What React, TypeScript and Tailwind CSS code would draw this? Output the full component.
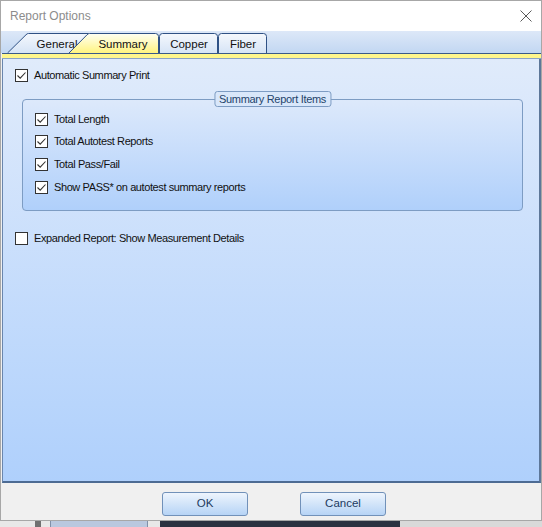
import type { ReactNode } from 'react';

function CheckBox({ checked }: { checked: boolean }) {
  return (
    <span className="flex h-[13px] w-[13px] shrink-0 items-center justify-center border border-[#333333] bg-white">
      {checked && (
        <svg width="11" height="11" viewBox="0 0 11 11" fill="none" aria-hidden="true">
          <path d="M1.5 5.5 L4.2 8.2 L9.5 2.5" stroke="#333333" strokeWidth="1.1" />
        </svg>
      )}
    </span>
  );
}

function Option({ checked, children }: { checked: boolean; children: ReactNode }) {
  return (
    <label className="flex h-[16px] items-center gap-[6px] text-[11px] tracking-[-0.4px] text-[#111]">
      <CheckBox checked={checked} />
      <span>{children}</span>
    </label>
  );
}

interface TabProps {
  label: string;
  width: number;
  path: string;
  fill: string;
  textX: number;
  className?: string;
}

function Tab({ label, width, path, fill, textX, className = '' }: TabProps) {
  return (
    <div className={`relative h-[20px] shrink-0 ${className}`} style={{ width }}>
      <svg className="absolute inset-0" width={width} height="20" viewBox={`0 0 ${width} 20`} aria-hidden="true">
        <path d={path} fill={`url(#${fill})`} stroke="#2f5185" strokeWidth="1" />
      </svg>
      <span
        className="absolute top-[4px] -translate-x-1/2 whitespace-nowrap text-[11.5px] leading-[14px] text-[#111]"
        style={{ left: textX }}
      >
        {label}
      </span>
    </div>
  );
}

function DialogButton({ children }: { children: ReactNode }) {
  return (
    <button
      type="button"
      className="relative h-[24px] w-[86px] overflow-hidden rounded-[3px] border border-[#7191b9] bg-gradient-to-b from-[#eef5fd] via-[#d2e4f9] to-[#b6d4f6] text-[11.5px] text-[#1d3a5f]"
    >
      {children}
    </button>
  );
}

export default function App() {
  return (
    <div className="relative h-[527px] w-[542px] overflow-hidden bg-[#f0f0f0] font-['Liberation_Sans',Arial,sans-serif]">
      <svg width="0" height="0" className="absolute">
        <defs>
          <linearGradient id="tabIdle" x1="0" y1="0" x2="0" y2="1">
            <stop offset="0" stopColor="#f5f8fd" />
            <stop offset="1" stopColor="#d6e4f6" />
          </linearGradient>
          <linearGradient id="tabActive" x1="0" y1="0" x2="0" y2="1">
            <stop offset="0" stopColor="#fffff4" />
            <stop offset="1" stopColor="#fff47c" />
          </linearGradient>
        </defs>
      </svg>

      {/* dialog window */}
      <div className="flex h-[521px] w-[542px] flex-col border border-[#a7a7a7] bg-[#f0f0f0]">
        <div className="flex h-[30px] shrink-0 items-center justify-between bg-white pl-[9px] pr-[7px]">
          <span className="text-[12px] text-[#8c8c8c]">Report Options</span>
          <svg width="14" height="14" viewBox="0 0 14 14" aria-hidden="true" className="mr-[1px]">
            <path d="M1.5 1.5 L12.5 12.5 M12.5 1.5 L1.5 12.5" stroke="#5a5a5a" strokeWidth="1" />
          </svg>
        </div>

        {/* tab strip */}
        <div className="flex h-[22px] shrink-0 items-end bg-gradient-to-b from-[#dde8f8] to-[#c2d7f2] pl-[6px]">
          <Tab
            label="General"
            width={82}
            fill="tabIdle"
            textX={50}
            path="M0.5 20 L19 1.8 Q20 0.5 21.5 0.5 L81.5 0.5 L81.5 20"
          />
          <Tab
            label="Summary"
            width={91}
            fill="tabActive"
            textX={55}
            className="-ml-[21px]"
            path="M0.5 20.5 L19 1.8 Q20 0.5 21.5 0.5 L87.5 0.5 Q90.5 0.5 90.5 3.5 L90.5 20.5"
          />
          <Tab
            label="Copper"
            width={59}
            fill="tabIdle"
            textX={30}
            path="M0.5 20 L0.5 3.5 Q0.5 0.5 3.5 0.5 L55.5 0.5 Q58.5 0.5 58.5 3.5 L58.5 20"
          />
          <Tab
            label="Fiber"
            width={49}
            fill="tabIdle"
            textX={25}
            path="M0.5 20 L0.5 3.5 Q0.5 0.5 3.5 0.5 L45.5 0.5 Q48.5 0.5 48.5 3.5 L48.5 20"
          />
        </div>

        {/* yellow selection bar */}
        <div className="ml-[1px] h-[6px] shrink-0 border-y border-t-[#3a5a8a] border-b-[#8aa3c6] bg-[#fff68c]" />

        {/* page */}
        <div className="ml-[1px] flex min-h-0 flex-1 flex-col border-b-2 border-l border-r-2 border-b-[#4d6b93] border-l-[#6a86ad] border-r-[#5d7799] bg-gradient-to-b from-[#e0ebfb] to-[#afd0fc] pl-[12px] pr-[16px] pt-[8px]">
          <Option checked>Automatic Summary Print</Option>

          <div className="relative ml-[7px] mt-[16px] flex h-[112px] flex-col gap-[6.7px] rounded-[4px] border border-[#7d9cc3] bg-gradient-to-b from-[#dde9fb] to-[#b0d0fb] pl-[12px] pt-[11px]">
            <span className="absolute left-1/2 top-[-9px] -translate-x-1/2 whitespace-nowrap rounded-[3px] border border-[#7d9cc3] bg-[#d9e7fa] px-[4px] text-[11px] leading-[14px] tracking-[-0.3px] text-[#24446b]">
              Summary Report Items
            </span>
            <Option checked>Total Length</Option>
            <Option checked>Total Autotest Reports</Option>
            <Option checked>Total Pass/Fail</Option>
            <Option checked>Show PASS* on autotest summary reports</Option>
          </div>

          <div className="mt-[19px]">
            <Option checked={false}>Expanded Report: Show Measurement Details</Option>
          </div>
        </div>

        <div className="flex h-[37px] shrink-0 items-start gap-[52px] pl-[161px] pt-[9px]">
          <DialogButton>OK</DialogButton>
          <DialogButton>Cancel</DialogButton>
        </div>
      </div>

      {/* window behind the dialog */}
      <div className="flex h-[6px] items-stretch">
        <div className="w-[35px] bg-[#e8e8e8]" />
        <div className="w-[6px] bg-[#707070]" />
        <div className="w-[9px] bg-[#e8e8e8]" />
        <div className="w-[98px] border-x border-[#8090a8] bg-[#b9c8df]" />
        <div className="w-[12px] bg-[#e8e8e8]" />
        <div className="w-[240px] bg-[#2b3140]" />
        <div className="flex-1 bg-[#d9d9d9]" />
      </div>
    </div>
  );
}
